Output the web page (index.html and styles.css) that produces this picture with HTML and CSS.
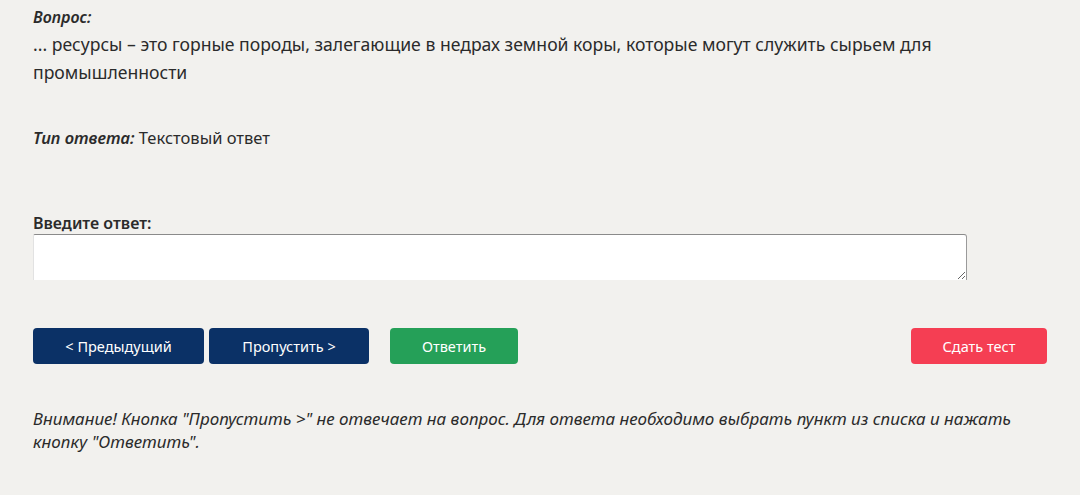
FILE: index.html
```html
<!DOCTYPE html>
<html lang="ru">
<head>
<meta charset="utf-8">
<link rel="stylesheet" href="styles.css">
</head>
<body>
<div class="page">
  <div class="question">
    <div class="label"><em>Вопрос:</em></div>
    <div class="qtext">... ресурсы – это горные породы, залегающие в недрах земной коры, которые могут служить сырьем для промышленности</div>
  </div>
  <div class="type"><em>Тип ответа:</em> Текстовый ответ</div>
  <div class="answer">
    <div class="answer-label">Введите ответ:</div>
    <textarea class="answer-box"></textarea>
  </div>
  <div class="buttons">
    <div class="nav">
      <button class="btn btn-navy btn-prev">&lt; Предыдущий</button>
      <button class="btn btn-navy btn-skip">Пропустить &gt;</button>
      <button class="btn btn-green">Ответить</button>
    </div>
    <button class="btn btn-red">Сдать тест</button>
  </div>
  <p class="note">Внимание! Кнопка "Пропустить &gt;" не отвечает на вопрос. Для ответа необходимо выбрать пункт из списка и нажать кнопку "Ответить".</p>
</div>
</body>
</html>
```

FILE: styles.css
```css
html, body {
  margin: 0;
  padding: 0;
  background: #f2f1ee;
}
body {
  font-family: "Noto Sans", "Open Sans", sans-serif;
  color: #2b2b2b;
}
.page {
  width: 1014px;
  padding: 4px 0 0 33px;
}
.label {
  font-size: 16px;
  line-height: 26px;
}
.label em, .type em {
  font-style: italic;
  font-weight: 600;
}
.qtext {
  font-size: 17.6px;
  line-height: 28px;
}
.type {
  margin-top: 39px;
  font-size: 16.5px;
  line-height: 26px;
}
.answer {
  margin-top: 61px;
  display: flex;
  flex-direction: column;
}
.answer-label {
  font-size: 16px;
  font-weight: 600;
  line-height: 22px;
}
.answer-box {
  width: 934px;
  height: 46px;
  box-sizing: border-box;
  margin: 0;
  background: #fff;
  border: none;
  border-top: 1px solid #8a8a8a;
  border-right: 1px solid #9a9a9a;
  border-left: 1px solid #e2e2e2;
  border-radius: 2px 3px 0 0;
  resize: vertical;
}
.buttons {
  margin-top: 48px;
  display: flex;
  justify-content: space-between;
  align-items: center;
}
.nav {
  display: flex;
  gap: 5px;
}
.btn {
  height: 36px;
  border: none;
  border-radius: 4px;
  color: #fff;
  font-family: "Noto Sans", "Open Sans", sans-serif;
  font-size: 14.5px;
  padding: 0;
}
.btn-navy { background: #0b3166; }
.btn-prev { width: 171px; }
.btn-skip { width: 160px; }
.btn-green {
  background: #25a058;
  width: 128px;
  margin-left: 16px;
}
.btn-red {
  background: #f53e53;
  width: 136px;
}
.note {
  margin: 43px 0 0;
  font-size: 17px;
  line-height: 23px;
  font-style: italic;
}
```
